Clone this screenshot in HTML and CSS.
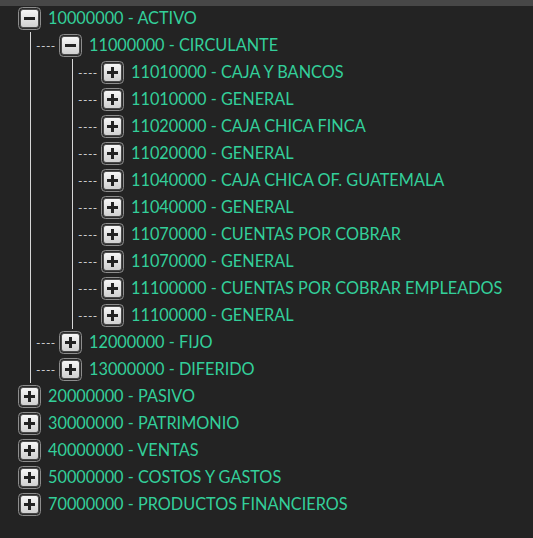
FILE: index.html
```html
<!DOCTYPE html>
<html>
<head>
<meta charset="utf-8">
<link rel="stylesheet" href="styles.css">
</head>
<body>
<div class="topbar"></div>
<svg width="0" height="0" class="defs">
  <defs>
    <linearGradient id="g" x1="0" y1="0" x2="0" y2="1">
      <stop offset="0" stop-color="#f7f7f7"/>
      <stop offset="1" stop-color="#cfcfcf"/>
    </linearGradient>
    <symbol id="plus" viewBox="0 0 23 23">
      <rect x="0.5" y="0.5" width="22" height="22" rx="4" fill="#2b2b2b" stroke="#8d8d8d"/>
      <rect x="2.5" y="2.5" width="18" height="18" rx="2.5" fill="url(#g)" stroke="#3a3a3a" stroke-width="0.8"/>
      <rect x="6" y="10" width="11" height="3" fill="#222"/>
      <rect x="10" y="6" width="3" height="11" fill="#222"/>
    </symbol>
    <symbol id="minus" viewBox="0 0 23 23">
      <rect x="0.5" y="0.5" width="22" height="22" rx="4" fill="#2b2b2b" stroke="#8d8d8d"/>
      <rect x="2.5" y="2.5" width="18" height="18" rx="2.5" fill="url(#g)" stroke="#3a3a3a" stroke-width="0.8"/>
      <rect x="6" y="10" width="11" height="3" fill="#222"/>
    </symbol>
  </defs>
</svg>
<ul class="tree">
  <li>
    <div class="row"><svg class="ico"><use href="#minus"/></svg><span class="label">10000000 - ACTIVO</span></div>
    <ul class="children">
      <li>
        <div class="row"><span class="dash">----</span><svg class="ico"><use href="#minus"/></svg><span class="label">11000000 - CIRCULANTE</span></div>
        <ul class="children sub">
          <li><div class="row"><span class="dash">----</span><svg class="ico"><use href="#plus"/></svg><span class="label">11010000 - CAJA Y BANCOS</span></div></li>
          <li><div class="row"><span class="dash">----</span><svg class="ico"><use href="#plus"/></svg><span class="label">11010000 - GENERAL</span></div></li>
          <li><div class="row"><span class="dash">----</span><svg class="ico"><use href="#plus"/></svg><span class="label">11020000 - CAJA CHICA FINCA</span></div></li>
          <li><div class="row"><span class="dash">----</span><svg class="ico"><use href="#plus"/></svg><span class="label">11020000 - GENERAL</span></div></li>
          <li><div class="row"><span class="dash">----</span><svg class="ico"><use href="#plus"/></svg><span class="label">11040000 - CAJA CHICA OF. GUATEMALA</span></div></li>
          <li><div class="row"><span class="dash">----</span><svg class="ico"><use href="#plus"/></svg><span class="label">11040000 - GENERAL</span></div></li>
          <li><div class="row"><span class="dash">----</span><svg class="ico"><use href="#plus"/></svg><span class="label">11070000 - CUENTAS POR COBRAR</span></div></li>
          <li><div class="row"><span class="dash">----</span><svg class="ico"><use href="#plus"/></svg><span class="label">11070000 - GENERAL</span></div></li>
          <li><div class="row"><span class="dash">----</span><svg class="ico"><use href="#plus"/></svg><span class="label">11100000 - CUENTAS POR COBRAR EMPLEADOS</span></div></li>
          <li><div class="row"><span class="dash">----</span><svg class="ico"><use href="#plus"/></svg><span class="label">11100000 - GENERAL</span></div></li>
        </ul>
      </li>
      <li><div class="row"><span class="dash">----</span><svg class="ico"><use href="#plus"/></svg><span class="label">12000000 - FIJO</span></div></li>
      <li><div class="row"><span class="dash">----</span><svg class="ico"><use href="#plus"/></svg><span class="label">13000000 - DIFERIDO</span></div></li>
    </ul>
  </li>
  <li><div class="row"><svg class="ico"><use href="#plus"/></svg><span class="label">20000000 - PASIVO</span></div></li>
  <li><div class="row"><svg class="ico"><use href="#plus"/></svg><span class="label">30000000 - PATRIMONIO</span></div></li>
  <li><div class="row"><svg class="ico"><use href="#plus"/></svg><span class="label">40000000 - VENTAS</span></div></li>
  <li><div class="row"><svg class="ico"><use href="#plus"/></svg><span class="label">50000000 - COSTOS Y GASTOS</span></div></li>
  <li><div class="row"><svg class="ico"><use href="#plus"/></svg><span class="label">70000000 - PRODUCTOS FINANCIEROS</span></div></li>
</ul>
</body>
</html>
```

FILE: styles.css
```css
html, body {
  margin: 0;
  padding: 0;
  background: #232323;
  height: 100%;
}
body {
  font-family: Lato, "Open Sans", sans-serif;
  overflow: hidden;
}
.topbar {
  height: 6px;
  background: #474747;
}
.defs {
  position: absolute;
  width: 0;
  height: 0;
}
.tree, .children {
  list-style: none;
  margin: 0;
  padding: 0;
}
.tree {
  margin-top: -1px;
  padding-left: 18px;
}
.row {
  height: 27px;
  display: flex;
  align-items: center;
}
.ico {
  width: 23px;
  height: 23px;
  flex: none;
}
.label {
  margin-left: 7px;
  padding-bottom: 2px;
  color: #33cf9a;
  font-size: 16.3px;
  white-space: nowrap;
}
.dash {
  width: 23px;
  flex: none;
  color: #d8d8d8;
  font-size: 12px;
  line-height: 1;
  letter-spacing: 0.5px;
}
.children {
  margin-left: 12px;
  border-left: 1px solid #d6d6d6;
  padding-left: 5px;
}
.children.sub {
  margin-left: 36px;
}
```
